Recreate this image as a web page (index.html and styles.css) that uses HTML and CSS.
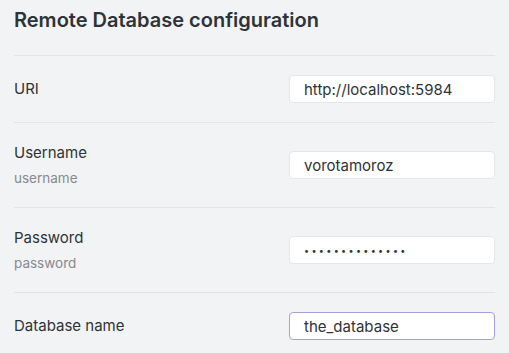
FILE: index.html
```html
<!DOCTYPE html>
<html lang="en">
<head>
    <meta charset="UTF-8">
    <meta name="viewport" content="width=device-width, initial-scale=1.0">
    <title>Remote Database configuration</title>
    <link rel="stylesheet" href="styles.css">
</head>
<body>
    <div class="settings">
        <h2 class="settings-title">Remote Database configuration</h2>

        <div class="setting-item">
            <div class="setting-info">
                <div class="setting-name">URI</div>
            </div>
            <div class="setting-control">
                <input class="text-input" type="text" value="http://localhost:5984">
            </div>
        </div>

        <div class="setting-item">
            <div class="setting-info">
                <div class="setting-name">Username</div>
                <div class="setting-desc">username</div>
            </div>
            <div class="setting-control">
                <input class="text-input" type="text" value="vorotamoroz">
            </div>
        </div>

        <div class="setting-item">
            <div class="setting-info">
                <div class="setting-name">Password</div>
                <div class="setting-desc">password</div>
            </div>
            <div class="setting-control">
                <input class="text-input password" type="password" value="secretpassword">
            </div>
        </div>

        <div class="setting-item">
            <div class="setting-info">
                <div class="setting-name">Database name</div>
            </div>
            <div class="setting-control">
                <input class="text-input focused" type="text" value="the_database">
            </div>
        </div>
    </div>
</body>
</html>
```

FILE: styles.css
```css
* {
    margin: 0;
    padding: 0;
    box-sizing: border-box;
}

body {
    font-family: Inter, "Noto Sans", sans-serif;
    background: #f2f3f5;
    color: #2e3338;
    overflow: hidden;
}

.settings {
    padding: 0 14px;
}

.settings-title {
    font-size: 20px;
    font-weight: 600;
    line-height: 24px;
    padding: 8px 0 23px;
}

.setting-item {
    display: flex;
    align-items: center;
    justify-content: space-between;
    padding: 19px 0;
    border-top: 1px solid #e3e4e8;
}

.setting-name {
    font-size: 15px;
    line-height: 22px;
}

.setting-desc {
    font-size: 13.5px;
    line-height: 20px;
    margin-top: 4px;
    color: #888a8e;
}

.text-input {
    display: block;
    width: 206px;
    height: 28px;
    padding: 0 14px;
    background: #fff;
    border: 1px solid #e6e6e9;
    border-radius: 4px;
    font-family: Inter, "Noto Sans", sans-serif;
    font-size: 15px;
    color: #2e3338;
    outline: none;
}

.text-input.password {
    font-size: 9px;
    letter-spacing: 2.35px;
}

.text-input.focused {
    border-color: #a69ee6;
}
```
